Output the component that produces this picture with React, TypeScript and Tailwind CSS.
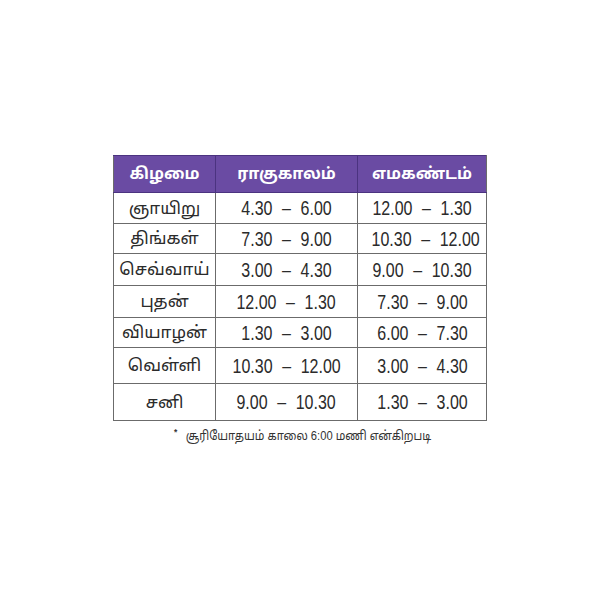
const rows = [
  { day: "ஞாயிறு", rahu: ["4.30", "6.00"], yama: ["12.00", "1.30"], h: "h-[31px]" },
  { day: "திங்கள்", rahu: ["7.30", "9.00"], yama: ["10.30", "12.00"], h: "h-[30px]" },
  { day: "செவ்வாய்", rahu: ["3.00", "4.30"], yama: ["9.00", "10.30"], h: "h-[32px]" },
  { day: "புதன்", rahu: ["12.00", "1.30"], yama: ["7.30", "9.00"], h: "h-[32px]" },
  { day: "வியாழன்", rahu: ["1.30", "3.00"], yama: ["6.00", "7.30"], h: "h-[30px]" },
  { day: "வெள்ளி", rahu: ["10.30", "12.00"], yama: ["3.00", "4.30"], h: "h-[36px]" },
  { day: "சனி", rahu: ["9.00", "10.30"], yama: ["1.30", "3.00"], h: "h-[37px]" },
];

const Range = ({ pair }: { pair: string[] }) => (
  <span className="inline-block scale-x-[0.8] whitespace-nowrap">
    {pair[0]}
    <span className="mx-[12px]">–</span>
    {pair[1]}
  </span>
);

export default function App() {
  return (
    <div className="w-[600px] h-[600px] bg-white flex flex-col items-center pt-[155px] font-['Liberation_Sans','Noto_Sans_Tamil','Noto_Sans',sans-serif] text-[#2b2b2b]">
      <table className="border-collapse w-[373px] table-fixed">
        <colgroup>
          <col className="w-[102px]" />
          <col className="w-[142px]" />
          <col className="w-[129px]" />
        </colgroup>
        <thead>
          <tr className="h-[37px] bg-[#6a4ba3] text-white text-[16px] font-bold">
            <th className="border border-[#4b3380] border-l-[#6b6b6b]">கிழமை</th>
            <th className="border border-[#4b3380]">ராகுகாலம்</th>
            <th className="border border-[#4b3380] border-r-[#6b6b6b]">எமகண்டம்</th>
          </tr>
        </thead>
        <tbody>
          {rows.map((r) => (
            <tr key={r.day} className={`${r.h} text-center leading-none`}>
              <td className="border border-[#6b6b6b] text-[17px] whitespace-nowrap">{r.day}</td>
              <td className="border border-[#6b6b6b] text-[20px]">
                <Range pair={r.rahu} />
              </td>
              <td className="border border-[#6b6b6b] text-[20px]">
                <Range pair={r.yama} />
              </td>
            </tr>
          ))}
        </tbody>
      </table>
      <p className="mt-[5px] ml-[6px] text-[13px] text-[#333] scale-x-[0.86] whitespace-nowrap">
        <sup className="mr-[10px] font-bold">*</sup>
        சூரியோதயம் காலை 6:00 மணி என்கிறபடி
      </p>
    </div>
  );
}
